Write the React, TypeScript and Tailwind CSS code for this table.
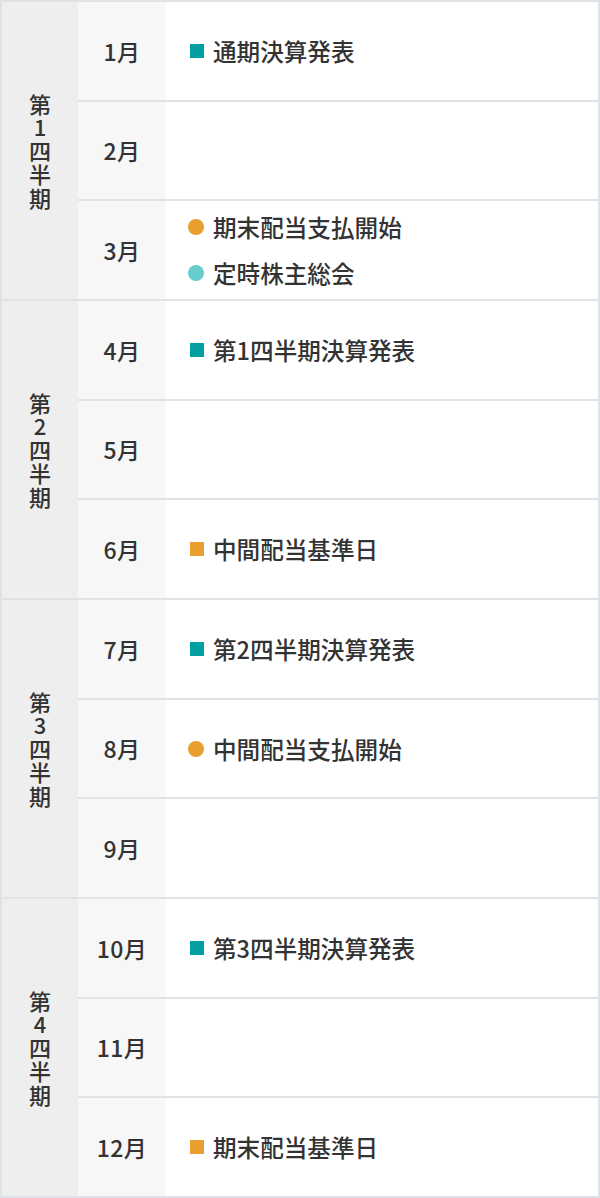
import React from "react";

type Item = { kind: "sq-teal" | "sq-orange" | "dot-orange" | "dot-cyan"; text: string };
type Month = { label: string; items: Item[] };
type Quarter = { num: string; months: Month[] };

const data: Quarter[] = [
  {
    num: "1",
    months: [
      { label: "1月", items: [{ kind: "sq-teal", text: "通期決算発表" }] },
      { label: "2月", items: [] },
      {
        label: "3月",
        items: [
          { kind: "dot-orange", text: "期末配当支払開始" },
          { kind: "dot-cyan", text: "定時株主総会" },
        ],
      },
    ],
  },
  {
    num: "2",
    months: [
      { label: "4月", items: [{ kind: "sq-teal", text: "第1四半期決算発表" }] },
      { label: "5月", items: [] },
      { label: "6月", items: [{ kind: "sq-orange", text: "中間配当基準日" }] },
    ],
  },
  {
    num: "3",
    months: [
      { label: "7月", items: [{ kind: "sq-teal", text: "第2四半期決算発表" }] },
      { label: "8月", items: [{ kind: "dot-orange", text: "中間配当支払開始" }] },
      { label: "9月", items: [] },
    ],
  },
  {
    num: "4",
    months: [
      { label: "10月", items: [{ kind: "sq-teal", text: "第3四半期決算発表" }] },
      { label: "11月", items: [] },
      { label: "12月", items: [{ kind: "sq-orange", text: "期末配当基準日" }] },
    ],
  },
];

function Marker({ kind }: { kind: Item["kind"] }) {
  if (kind === "sq-teal") return <span className="ml-[2px] mr-[9px] block h-[14px] w-[14px] shrink-0 bg-[#00a0a0]" />;
  if (kind === "sq-orange") return <span className="ml-[2px] mr-[9px] block h-[14px] w-[14px] shrink-0 bg-[#e99f2e]" />;
  if (kind === "dot-orange") return <span className="mr-[9px] block h-[16px] w-[16px] shrink-0 rounded-full bg-[#e99f2e]" />;
  return <span className="mr-[9px] block h-[16px] w-[16px] shrink-0 rounded-full bg-[#66cccc]" />;
}

export default function App() {
  return (
    <div
      className="flex h-[1198px] w-[600px] flex-col gap-[2px] border-2 border-[#dfe2e6] bg-[#dfe2e6] text-[#333333]"
      style={{ fontFamily: '"Noto Sans CJK JP", "Noto Sans", sans-serif' }}
    >
      {data.map((q) => (
        <div key={q.num} className="flex flex-1">
          <div className="flex w-[76px] shrink-0 items-center justify-center bg-[#eeeeee]">
            <div className="flex flex-col items-center text-[22px] font-medium leading-[23.5px]">
              <span className="leading-[23.5px]">第</span>
              <span className="leading-[23.5px]">{q.num}</span>
              <span className="leading-[23.5px]">四</span>
              <span className="leading-[23.5px]">半</span>
              <span className="leading-[23.5px]">期</span>
            </div>
          </div>
          <div className="flex flex-1 flex-col gap-[2px]">
            {q.months.map((m) => (
              <div key={m.label} className="flex flex-1">
                <div className="flex w-[88px] shrink-0 items-center justify-center bg-[#f7f7f7] text-[23px] font-medium tracking-[0.5px]">
                  {m.label}
                </div>
                <div className="flex flex-1 flex-col justify-center gap-[14px] bg-white pl-[22px]">
                  {m.items.map((it) => (
                    <div key={it.text} className="flex items-center text-[23.6px] font-medium leading-[32px]">
                      <Marker kind={it.kind} />
                      <span>{it.text}</span>
                    </div>
                  ))}
                </div>
              </div>
            ))}
          </div>
        </div>
      ))}
    </div>
  );
}
